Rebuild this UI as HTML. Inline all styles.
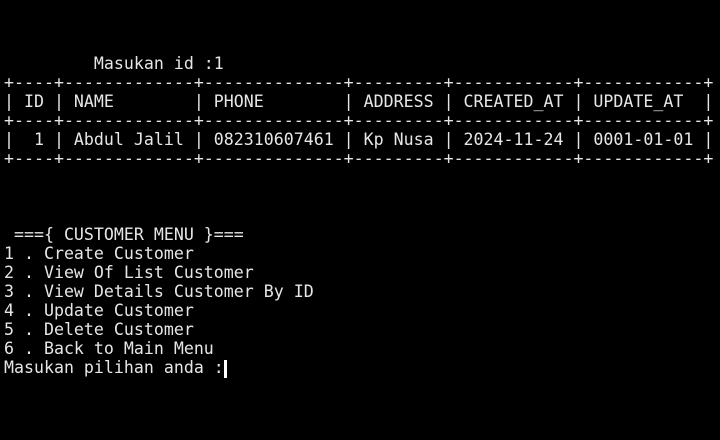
<!DOCTYPE html><html><head><style>
body{margin:0;background:#000;width:720px;height:440px;overflow:hidden}
pre{margin:0;position:absolute;left:4px;top:53.5px;font-family:"DejaVu Sans Mono","Liberation Mono",monospace;font-size:16.6px;line-height:19px;color:#e6e6e6}
.c{position:absolute;left:224px;top:360px;width:3px;height:18px;background:#fff}
</style></head><body><pre>         Masukan id :1
+----+-------------+--------------+---------+------------+------------+
| ID | NAME        | PHONE        | ADDRESS | CREATED_AT | UPDATE_AT  |
+----+-------------+--------------+---------+------------+------------+
|  1 | Abdul Jalil | 082310607461 | Kp Nusa | 2024-11-24 | 0001-01-01 |
+----+-------------+--------------+---------+------------+------------+



 ==={ CUSTOMER MENU }===
1 . Create Customer
2 . View Of List Customer
3 . View Details Customer By ID
4 . Update Customer
5 . Delete Customer
6 . Back to Main Menu
Masukan pilihan anda :</pre><div class="c"></div></body></html>
